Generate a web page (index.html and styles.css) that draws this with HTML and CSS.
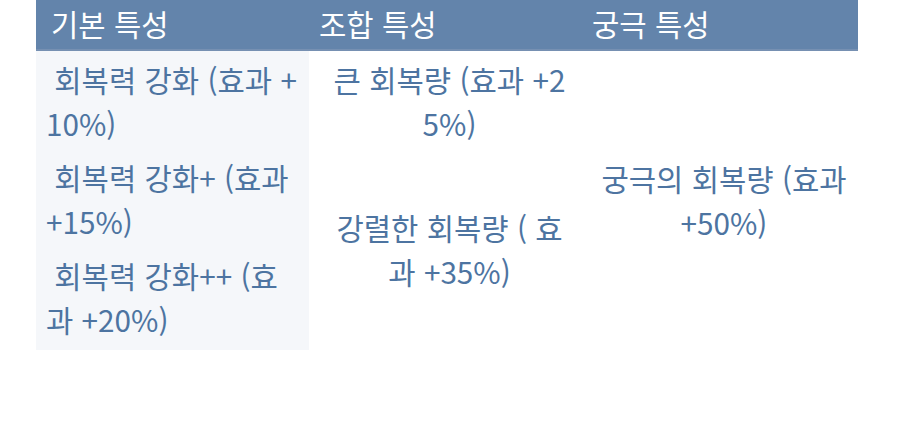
FILE: index.html
```html
<!DOCTYPE html>
<html lang="ko">
<head>
<meta charset="utf-8">
<link rel="stylesheet" href="styles.css">
</head>
<body>
<div class="traits">
  <div class="head head-1">기본 특성</div>
  <div class="head head-2">조합 특성</div>
  <div class="head head-3">궁극 특성</div>

  <div class="cell basic r1">&nbsp;회복력 강화 (효과 +10%)</div>
  <div class="cell combo c-r1">큰 회복량 (효과 +25%)</div>
  <div class="cell ultimate">궁극의 회복량 (효과 +50%)</div>

  <div class="cell basic r2">&nbsp;회복력 강화+ (효과 +15%)</div>
  <div class="cell combo c-r2">강렬한 회복량 ( 효과 +35%)</div>

  <div class="cell basic r3">&nbsp;회복력 강화++ (효과 +20%)</div>
</div>
</body>
</html>
```

FILE: styles.css
```css
html, body {
  margin: 0;
  padding: 0;
  background: #ffffff;
}

body {
  font-family: "Noto Sans CJK KR", "Noto Sans", sans-serif;
  font-size: 29.7px;
  line-height: 44px;
  color: #4d74a1;
}

.traits {
  margin-left: 36px;
  width: 822px;
  display: grid;
  grid-template-columns: 273px 275px 274px;
  grid-template-rows: 51px 98px 98px 103px;
}

.head {
  background: #6384ab;
  border-bottom: 2px solid #7690b2;
  color: #ffffff;
  display: flex;
  align-items: center;
  line-height: 1;
  padding-bottom: 2px;
}

.head-1 { padding-left: 15px; }
.head-2 { padding-left: 10px; }
.head-3 { padding-left: 8px; }

.cell {
  word-break: break-all;
  box-sizing: border-box;
}

.basic {
  grid-column: 1;
  background: #f5f7fa;
  padding: 7px 4px 0 10px;
}

.r1 { grid-row: 2; }
.r2 { grid-row: 3; }
.r3 { grid-row: 4; }

.combo {
  grid-column: 2;
  text-align: center;
  padding: 0 9px 0 15px;
}

.c-r1 {
  grid-row: 2;
  padding-top: 7px;
}

.c-r2 {
  grid-row: 3 / span 2;
  display: flex;
  align-items: center;
  justify-content: center;
}

.ultimate {
  grid-column: 3;
  grid-row: 2 / span 3;
  text-align: center;
  padding: 0 3px 0 9px;
  display: flex;
  align-items: center;
  justify-content: center;
}
```
